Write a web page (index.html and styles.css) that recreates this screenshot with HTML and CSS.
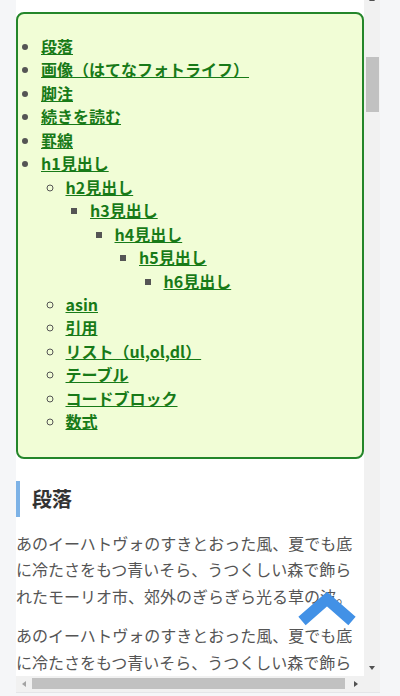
FILE: index.html
```html
<!DOCTYPE html>
<html lang="ja">
<head>
    <meta charset="UTF-8">
    <meta name="viewport" content="width=device-width, initial-scale=1.0">
    <title>Markdown記法のサンプル</title>
    <link rel="stylesheet" href="styles.css">
</head>
<body>
    <div class="frame">
        <div class="entry">
            <div class="toc">
                <ul>
                    <li><a href="#s1">段落</a></li>
                    <li><a href="#s2">画像（はてなフォトライフ）</a></li>
                    <li><a href="#s3">脚注</a></li>
                    <li><a href="#s4">続きを読む</a></li>
                    <li><a href="#s5">罫線</a></li>
                    <li><a href="#s6">h1見出し</a>
                        <ul>
                            <li><a href="#s7">h2見出し</a>
                                <ul>
                                    <li><a href="#s8">h3見出し</a>
                                        <ul>
                                            <li><a href="#s9">h4見出し</a>
                                                <ul>
                                                    <li><a href="#s10">h5見出し</a>
                                                        <ul>
                                                            <li><a href="#s11">h6見出し</a></li>
                                                        </ul>
                                                    </li>
                                                </ul>
                                            </li>
                                        </ul>
                                    </li>
                                </ul>
                            </li>
                            <li><a href="#s12">asin</a></li>
                            <li><a href="#s13">引用</a></li>
                            <li><a href="#s14">リスト（ul,ol,dl）</a></li>
                            <li><a href="#s15">テーブル</a></li>
                            <li><a href="#s16">コードブロック</a></li>
                            <li><a href="#s17">数式</a></li>
                        </ul>
                    </li>
                </ul>
            </div>

            <section>
                <h3 class="section-title" id="s1">段落</h3>
                <p>あのイーハトヴォのすきとおった風、夏でも底に冷たさをもつ青いそら、うつくしい森で飾られたモーリオ市、郊外のぎらぎら光る草の波。</p>
                <p>あのイーハトヴォのすきとおった風、夏でも底に冷たさをもつ青いそら、うつくしい森で飾られたモーリオ市、郊外のぎらぎら光る草の波。</p>
            </section>
        </div>

        <!-- スクロールバー -->
        <div class="vbar">
            <span class="sb-btn up"></span>
            <div class="sb-track"><div class="sb-thumb"></div></div>
            <span class="sb-btn down"></span>
        </div>
        <div class="hbar">
            <span class="sb-btn left"></span>
            <div class="sb-track"><div class="sb-thumb"></div></div>
            <span class="sb-btn right"></span>
        </div>
        <div class="sb-corner"></div>
    </div>

    <a class="to-top" href="#s1" aria-label="ページの先頭へ">
        <svg width="62" height="38" viewBox="0 0 62 38">
            <polyline points="6,31 31,9 56,31" fill="none" stroke="#4291e6" stroke-width="11" stroke-linejoin="miter"/>
        </svg>
    </a>
</body>
</html>
```

FILE: styles.css
```css
body {
    margin: 0;
    padding-left: 16px;
    background-color: #f5f6f8;
    font-family: "Noto Sans CJK JP", "Noto Sans", sans-serif;
}
.frame {
    display: grid;
    grid-template-columns: 348px 16px;
    grid-template-rows: 685px 16px;
    width: 364px;
    margin-top: -9px;
    border-bottom: 1px solid #e4e5e8;
}
.entry {
    overflow: hidden;
    background-color: #fff;
    color: #555;
    font-size: 16px;
}
.entry p {
    margin: 0 0 13px;
    line-height: 26.5px;
}

/* 目次 */
.toc {
    margin-top: 21px;
    padding: 21px 0 23px;
    background-color: #f1fdd6;
    border: 2px solid #24862a;
    border-radius: 8px;
}
.toc ul {
    margin: 0;
    padding-left: 23px;
    color: #555;
}
.toc ul ul {
    padding-left: 24.5px;
}
.toc li {
    line-height: 23.45px;
}
.toc a {
    color: #187a18;
    font-weight: bold;
    text-decoration: underline;
}

/* 見出し */
.section-title {
    margin: 22px 0 13px;
    padding-left: 12px;
    border-left: 4px solid #7db2e6;
    color: #333;
    font-size: 20px;
    line-height: 36px;
}

/* スクロールバー */
.vbar,
.hbar {
    display: flex;
    background-color: #f1f1f1;
}
.vbar {
    flex-direction: column;
}
.sb-track {
    flex: 1;
    display: flex;
}
.vbar .sb-track {
    flex-direction: column;
}
.sb-thumb {
    background-color: #c1c1c1;
}
.vbar .sb-thumb {
    height: 55px;
    margin: 50px 1px 0 2px;
}
.hbar .sb-thumb {
    flex: 1;
    margin: 2px 3px 3px 0;
}
.sb-btn {
    display: flex;
    align-items: center;
    justify-content: center;
    width: 16px;
    height: 16px;
}
.sb-btn::before {
    content: "";
    border: 4px solid transparent;
}
.sb-btn.up::before {
    border-bottom-color: #505050;
    border-top-width: 0;
    border-left-width: 3.5px;
    border-right-width: 3.5px;
}
.sb-btn.down::before {
    border-top-color: #505050;
    border-bottom-width: 0;
    border-left-width: 3.5px;
    border-right-width: 3.5px;
}
.sb-btn.left::before {
    border-right-color: #a3a3a3;
    border-left-width: 0;
    border-top-width: 3.5px;
    border-bottom-width: 3.5px;
}
.sb-btn.right::before {
    border-left-color: #505050;
    border-right-width: 0;
    border-top-width: 3.5px;
    border-bottom-width: 3.5px;
}
.sb-corner {
    background-color: #f1f1f1;
}

.to-top {
    position: fixed;
    right: 42px;
    bottom: 68px;
    line-height: 0;
}
```
